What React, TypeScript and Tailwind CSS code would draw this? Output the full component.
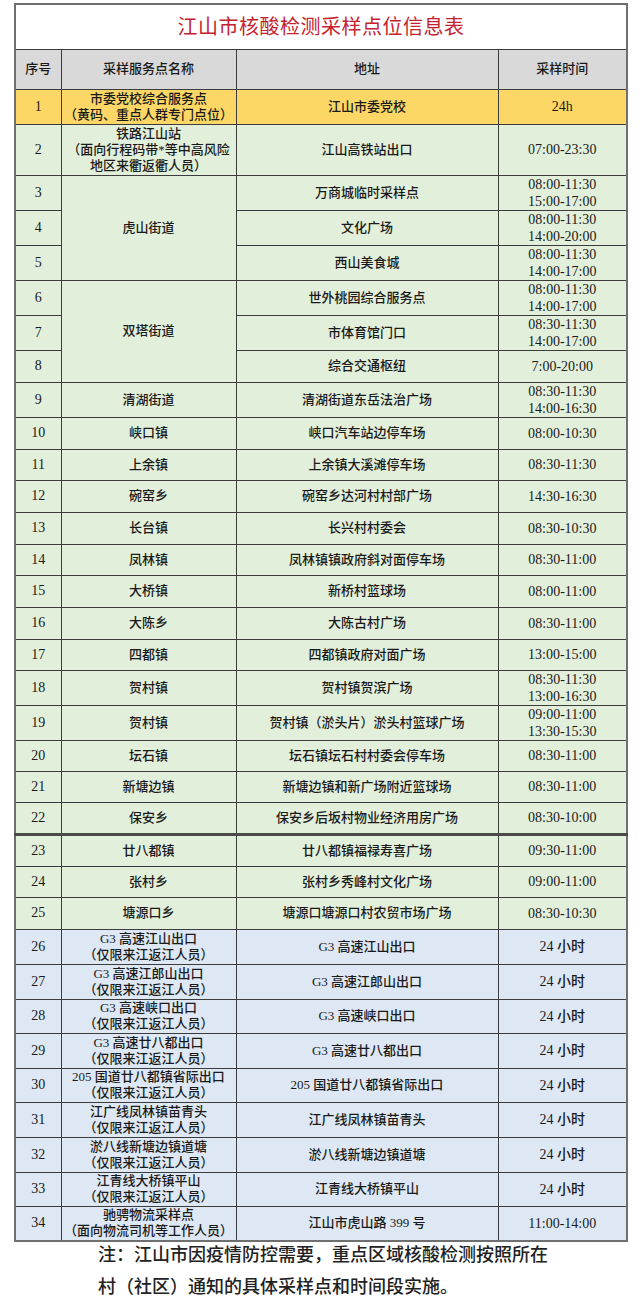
import React from "react";

type Row = {
  no: number;
  name?: string[];
  span?: number;
  addr: string;
  time: string[];
  h: number;
  tone: "yellow" | "green" | "blue";
  thick?: boolean;
};

const gx = "（仅限来江返江人员）";

const rows: Row[] = [
  { no: 1, name: ["市委党校综合服务点", "（黄码、重点人群专门点位）"], addr: "江山市委党校", time: ["24h"], h: 35, tone: "yellow" },
  { no: 2, name: ["铁路江山站", "（面向行程码带*等中高风险", "地区来衢返衢人员）"], addr: "江山高铁站出口", time: ["07:00-23:30"], h: 51, tone: "green" },
  { no: 3, name: ["虎山街道"], span: 3, addr: "万商城临时采样点", time: ["08:00-11:30", "15:00-17:00"], h: 35, tone: "green" },
  { no: 4, addr: "文化广场", time: ["08:00-11:30", "14:00-20:00"], h: 35, tone: "green" },
  { no: 5, addr: "西山美食城", time: ["08:00-11:30", "14:00-17:00"], h: 35, tone: "green" },
  { no: 6, name: ["双塔街道"], span: 3, addr: "世外桃园综合服务点", time: ["08:00-11:30", "14:00-17:00"], h: 35, tone: "green" },
  { no: 7, addr: "市体育馆门口", time: ["08:30-11:30", "14:00-17:00"], h: 34, tone: "green" },
  { no: 8, addr: "综合交通枢纽", time: ["7:00-20:00"], h: 32, tone: "green" },
  { no: 9, name: ["清湖街道"], addr: "清湖街道东岳法治广场", time: ["08:30-11:30", "14:00-16:30"], h: 34, tone: "green" },
  { no: 10, name: ["峡口镇"], addr: "峡口汽车站边停车场", time: ["08:00-10:30"], h: 32, tone: "green" },
  { no: 11, name: ["上余镇"], addr: "上余镇大溪滩停车场", time: ["08:30-11:30"], h: 31, tone: "green" },
  { no: 12, name: ["碗窑乡"], addr: "碗窑乡达河村村部广场", time: ["14:30-16:30"], h: 32, tone: "green" },
  { no: 13, name: ["长台镇"], addr: "长兴村村委会", time: ["08:30-10:30"], h: 32, tone: "green" },
  { no: 14, name: ["凤林镇"], addr: "凤林镇镇政府斜对面停车场", time: ["08:30-11:00"], h: 31, tone: "green" },
  { no: 15, name: ["大桥镇"], addr: "新桥村篮球场", time: ["08:00-11:00"], h: 32, tone: "green" },
  { no: 16, name: ["大陈乡"], addr: "大陈古村广场", time: ["08:30-11:00"], h: 32, tone: "green" },
  { no: 17, name: ["四都镇"], addr: "四都镇政府对面广场", time: ["13:00-15:00"], h: 31, tone: "green" },
  { no: 18, name: ["贺村镇"], addr: "贺村镇贺滨广场", time: ["08:30-11:30", "13:00-16:30"], h: 35, tone: "green" },
  { no: 19, name: ["贺村镇"], addr: "贺村镇（淤头片）淤头村篮球广场", time: ["09:00-11:00", "13:30-15:30"], h: 35, tone: "green" },
  { no: 20, name: ["坛石镇"], addr: "坛石镇坛石村村委会停车场", time: ["08:30-11:00"], h: 31, tone: "green" },
  { no: 21, name: ["新塘边镇"], addr: "新塘边镇和新广场附近篮球场", time: ["08:30-11:00"], h: 31, tone: "green" },
  { no: 22, name: ["保安乡"], addr: "保安乡后坂村物业经济用房广场", time: ["08:30-10:00"], h: 32, tone: "green", thick: true },
  { no: 23, name: ["廿八都镇"], addr: "廿八都镇福禄寿喜广场", time: ["09:30-11:00"], h: 32, tone: "green" },
  { no: 24, name: ["张村乡"], addr: "张村乡秀峰村文化广场", time: ["09:00-11:00"], h: 31, tone: "green" },
  { no: 25, name: ["塘源口乡"], addr: "塘源口塘源口村农贸市场广场", time: ["08:30-10:30"], h: 32, tone: "green" },
  { no: 26, name: ["G3 高速江山出口", gx], addr: "G3 高速江山出口", time: ["24 小时"], h: 35, tone: "blue" },
  { no: 27, name: ["G3 高速江郎山出口", gx], addr: "G3 高速江郎山出口", time: ["24 小时"], h: 35, tone: "blue" },
  { no: 28, name: ["G3 高速峡口出口", gx], addr: "G3 高速峡口出口", time: ["24 小时"], h: 34, tone: "blue" },
  { no: 29, name: ["G3 高速廿八都出口", gx], addr: "G3 高速廿八都出口", time: ["24 小时"], h: 35, tone: "blue" },
  { no: 30, name: ["205 国道廿八都镇省际出口", gx], addr: "205 国道廿八都镇省际出口", time: ["24 小时"], h: 34, tone: "blue" },
  { no: 31, name: ["江广线凤林镇苗青头", gx], addr: "江广线凤林镇苗青头", time: ["24 小时"], h: 35, tone: "blue" },
  { no: 32, name: ["淤八线新塘边镇道塘", gx], addr: "淤八线新塘边镇道塘", time: ["24 小时"], h: 35, tone: "blue" },
  { no: 33, name: ["江青线大桥镇平山", gx], addr: "江青线大桥镇平山", time: ["24 小时"], h: 34, tone: "blue" },
  { no: 34, name: ["驰骋物流采样点", "（面向物流司机等工作人员）"], addr: "江山市虎山路 399 号", time: ["11:00-14:00"], h: 35, tone: "blue" },
];

const toneBg = {
  yellow: "bg-[#fdd766]",
  green: "bg-[#e2efda]",
  blue: "bg-[#dde8f4]",
};

const font = { fontFamily: '"Liberation Serif", "Noto Sans CJK SC", serif' };

export default function App() {
  return (
    <div className="w-[640px] min-h-[1313px] bg-white pt-[3px]" style={font}>
      <table className="ml-[14px] w-[612px] table-fixed border-collapse border-2 border-[#6f6f6f] text-[13px] leading-[16px] font-medium text-[#1a1a1a]">
        <colgroup>
          <col className="w-[46px]" />
          <col className="w-[175px]" />
          <col className="w-[262px]" />
          <col className="w-[129px]" />
        </colgroup>
        <tbody>
          <tr className="h-[45px]">
            <td colSpan={4} className="border border-[#3c3c3c] bg-white text-center text-[20px] font-normal tracking-[0.5px] text-[#c52230]">
              江山市核酸检测采样点位信息表
            </td>
          </tr>
          <tr className="h-[40px] bg-[#d9d9d9]">
            <td className="border border-[#3c3c3c] text-center">序号</td>
            <td className="border border-[#3c3c3c] text-center">采样服务点名称</td>
            <td className="border border-[#3c3c3c] text-center">地址</td>
            <td className="border border-[#3c3c3c] text-center">采样时间</td>
          </tr>
          {rows.map((r) => {
            const b = r.thick
              ? "border border-[#3c3c3c] border-b-[3px] border-b-[#4a4a4a]"
              : "border border-[#3c3c3c]";
            return (
              <tr key={r.no} className={toneBg[r.tone]} style={{ height: r.h }}>
                <td className={`${b} text-center text-[14px]`}>{r.no}</td>
                {r.name && (
                  <td className={`${b} text-center`} rowSpan={r.span}>
                    {r.name.map((l, i) => (
                      <div key={i} className="whitespace-nowrap">{l}</div>
                    ))}
                  </td>
                )}
                <td className={`${b} text-center whitespace-nowrap`}>{r.addr}</td>
                <td className={`${b} text-center text-[14px] leading-[17px]`}>
                  {r.time.map((t, i) => (
                    <div key={i}>{t}</div>
                  ))}
                </td>
              </tr>
            );
          })}
        </tbody>
      </table>
      <div className="ml-[98px] mt-[-3px] text-[18px] leading-[32px] font-medium text-[#222]">
        <p>注：江山市因疫情防控需要，重点区域核酸检测按照所在</p>
        <p>村（社区）通知的具体采样点和时间段实施。</p>
      </div>
    </div>
  );
}
